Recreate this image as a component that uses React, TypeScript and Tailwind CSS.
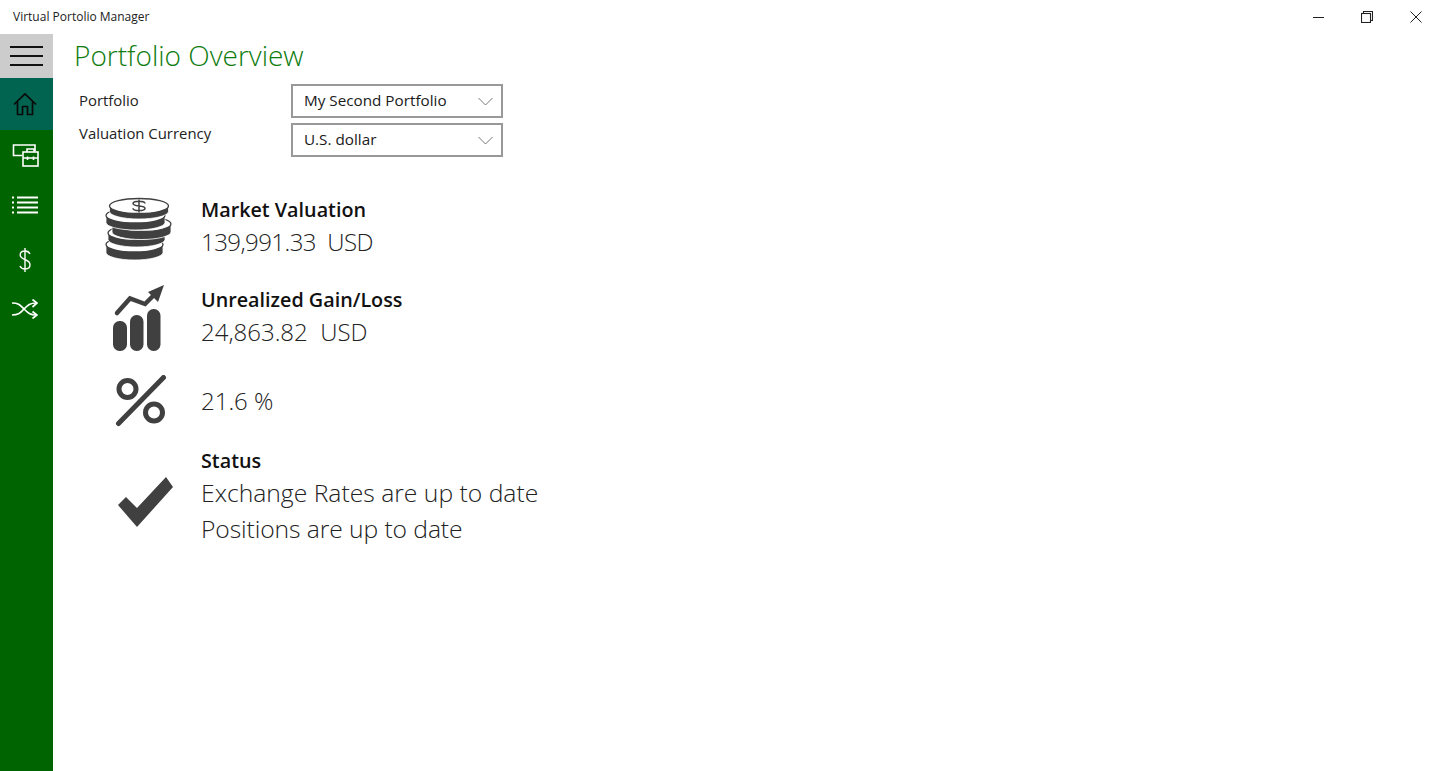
import React from "react";

const DARK = "#404040";

function Coin({ cx, cy, rx, h }: { cx: number; cy: number; rx: number; h: number }) {
  const ry = 7.5;
  return (
    <g>
      <path
        d={`M${cx - rx} ${cy} V${cy + h} A${rx} ${ry} 0 0 0 ${cx + rx} ${cy + h} V${cy} Z`}
        fill={DARK}
        stroke="#ffffff"
        strokeWidth="0.8"
      />
      <ellipse cx={cx} cy={cy} rx={rx} ry={ry} fill="#ffffff" stroke={DARK} strokeWidth="1.3" />
    </g>
  );
}

function Coins() {
  return (
    <svg width="80" height="76" viewBox="0 0 80 76">
      <Coin cx={34.5} cy={54.5} rx={28.5} h={8} />
      <Coin cx={36.5} cy={43} rx={28.5} h={6.5} />
      <Coin cx={41.5} cy={34} rx={29.5} h={8} />
      <Coin cx={35.5} cy={25.5} rx={29.5} h={7} />
      <Coin cx={39} cy={16} rx={29.5} h={5.5} />
      <path
        d="M45 13.6c0-1.5-2.6-2.4-6-2.4s-6 .9-6 2.4c0 3.4 12 1.6 12 4.6 0 1.5-2.6 2.4-6 2.4s-6-.9-6-2.4M39 9.5v13"
        fill="none"
        stroke={DARK}
        strokeWidth="1.5"
      />
    </svg>
  );
}

function Chart() {
  return (
    <svg width="70" height="76" viewBox="0 0 70 76" fill={DARK}>
      <rect x="8" y="41" width="14" height="30" rx="6.5" />
      <rect x="25" y="35" width="13.5" height="36" rx="6.5" />
      <rect x="42" y="29" width="13.5" height="42" rx="6.5" />
      <path d="M12 33 L25 18.5 L40 24 L50 14" fill="none" stroke={DARK} strokeWidth="4.5" strokeLinecap="round" />
      <path d="M59 5 L43 12 L53 22 Z" />
    </svg>
  );
}

function Percent() {
  return (
    <svg width="52" height="52" viewBox="0 0 52 52" fill="none" stroke={DARK} strokeWidth="5">
      <circle cx="12.5" cy="14" r="8.5" />
      <circle cx="39" cy="37.5" r="8.5" />
      <path d="M3.5 48.5 L48.5 2.5" strokeLinecap="round" />
    </svg>
  );
}

function Check() {
  return (
    <svg width="60" height="56" viewBox="0 0 60 56" fill={DARK}>
      <path d="M3 32 L11 24 L22 35 L51 4 L58 14 L22 54 Z" />
    </svg>
  );
}

function Select({ label }: { label: string }) {
  return (
    <div className="flex h-[34px] w-[212px] items-center justify-between border-2 border-[#999999] bg-white pb-[2px] pl-[11px] pr-[8px] text-[15.25px] text-[#1a1a1a]">
      <span>{label}</span>
      <svg width="15" height="9" viewBox="0 0 15 9" fill="none" stroke="#777777" strokeWidth="1" className="mt-[2px]">
        <path d="M0.5 1 L7.5 8 L14.5 1" />
      </svg>
    </div>
  );
}

function Row({
  icon,
  head,
  lines,
  className,
}: {
  icon: React.ReactNode;
  head?: string;
  lines: { text: string; cls: string }[];
  className: string;
}) {
  return (
    <div className={`flex ${className}`}>
      <div className="flex w-[97px] shrink-0 items-center">{icon}</div>
      <div className="flex flex-col justify-center">
        {head && <div className="text-[19.75px] font-semibold leading-[29px] text-[#111111]">{head}</div>}
        {lines.map((l) => (
          <div key={l.text} className={`whitespace-pre font-light leading-[36px] text-[#222222] ${l.cls}`}>
            {l.text}
          </div>
        ))}
      </div>
    </div>
  );
}

function NavIcon({ children, className }: { children: React.ReactNode; className: string }) {
  return <div className={`flex w-full items-center justify-center pr-[3px] ${className}`}>{children}</div>;
}

export default function App() {
  return (
    <div className="flex h-[771px] w-[1440px] flex-col overflow-hidden bg-white" style={{ fontFamily: '"Open Sans", sans-serif' }}>
      <header className="flex h-[34px] shrink-0 items-center justify-between">
        <span className="pl-[13px] text-[12px] text-[#222222]">Virtual Portolio Manager</span>
        <div className="flex items-center">
          <div className="flex h-[34px] w-[48px] items-center justify-center">
            <svg width="12" height="12" viewBox="0 0 12 12" stroke="#222" fill="none"><path d="M0 6.5H11" /></svg>
          </div>
          <div className="flex h-[34px] w-[48px] items-center justify-center">
            <svg width="12" height="12" viewBox="0 0 12 12" stroke="#222" fill="none" strokeWidth="1.1"><rect x="0.5" y="2.5" width="9" height="9" /><path d="M2.5 2.5V0.5H11.5V9.5H9.5" /></svg>
          </div>
          <div className="flex h-[34px] w-[49px] items-center justify-center">
            <svg width="12" height="12" viewBox="0 0 12 12" stroke="#222" fill="none"><path d="M0.5 0.5L11.5 11.5M11.5 0.5L0.5 11.5" /></svg>
          </div>
        </div>
      </header>
      <div className="flex min-h-0 flex-1">
        <nav className="flex w-[53px] shrink-0 flex-col bg-[#006400]">
          <div className="flex h-[44px] w-full items-center justify-center bg-[#cccccc]">
            <svg width="33" height="20" viewBox="0 0 33 20" fill="#111"><rect y="0" width="33" height="2" /><rect y="9" width="33" height="2" /><rect y="18" width="33" height="2" /></svg>
          </div>
          <NavIcon className="h-[52px] bg-[#006450]">
            <svg width="24" height="24" viewBox="0 0 24 24" fill="none" stroke="#0a0a0a" strokeWidth="1.7" strokeLinejoin="round"><path d="M1 12.5 L12 1.8 L23 12.5" /><path d="M4.5 10 V22.5 H9.5 V14.5 H14.5 V22.5 H19.5 V10" /></svg>
          </NavIcon>
          <NavIcon className="h-[50px]">
            <svg width="27" height="24" viewBox="0 0 27 24" fill="none" stroke="#fff" strokeWidth="1.6"><path d="M10 12.5 H1.5 V2 H23 V8" /><rect x="11" y="9" width="15" height="14" /><path d="M15 9 V6 H22 V9 M11 15 H26" /><path d="M15.5 13.5 V17 M21.5 13.5 V17" /></svg>
          </NavIcon>
          <NavIcon className="h-[49px]">
            <svg width="26" height="18" viewBox="0 0 26 18" fill="#fff"><rect x="5" y="0.5" width="21" height="2" /><rect x="5" y="5.5" width="21" height="2" /><rect x="5" y="10.5" width="21" height="2" /><rect x="5" y="15.5" width="21" height="2" /><rect x="0" y="0.5" width="2" height="2" /><rect x="0" y="5.5" width="2" height="2" /><rect x="0" y="10.5" width="2" height="2" /><rect x="0" y="15.5" width="2" height="2" /></svg>
          </NavIcon>
          <NavIcon className="h-[61px]">
            <svg width="12" height="24" viewBox="0 0 12 24" fill="none" stroke="#fff" strokeWidth="1.4"><path d="M11 6 C10 3.8 8.5 3 6 3 C3 3 1.2 4.7 1.2 7 C1.2 12.5 11 10.5 11 16.8 C11 19.3 9 21 6 21 C3.5 21 1.8 20 1 18 M6 0 V24" /></svg>
          </NavIcon>
          <NavIcon className="h-[38px]">
            <svg width="26" height="20" viewBox="0 0 26 20" fill="none" stroke="#fff" strokeWidth="1.7"><path d="M0 4 C7 4 8 6 12 10 C16 14 18 16 24 16" /><path d="M0 16 C7 16 8 14 12 10 C16 6 18 4 24 4" /><path d="M20.5 0.5 L25 4 L20.5 8 M20.5 12.5 L25 16 L20.5 19.5" /></svg>
          </NavIcon>
        </nav>
        <main className="flex-1 pl-[21px]">
          <h1 className="pt-[1px] text-[28px] font-light leading-[40px] text-[#107c10]">Portfolio Overview</h1>
          <div className="mt-[9px] flex pl-[5px]">
            <div className="w-[212px] text-[14.9px] text-[#222222]">
              <div className="pt-[2px] leading-[28px]">Portfolio</div>
              <div className="pt-[5px] leading-[28px]">Valuation Currency</div>
            </div>
            <div className="flex flex-col gap-[5px]">
              <Select label="My Second Portfolio" />
              <Select label="U.S. dollar" />
            </div>
          </div>
          <div className="pl-[30px]">
            <Row
              className="mt-[32px] h-[76px]"
              icon={<div className="ml-[-4px] pt-[2px]"><Coins /></div>}
              head="Market Valuation"
              lines={[{ text: "139,991.33  USD", cls: "text-[24px] tracking-[-0.55px]" }]}
            />
            <Row
              className="mt-[14px] h-[76px]"
              icon={<div className="ml-[1px] pt-[2px]"><Chart /></div>}
              head="Unrealized Gain/Loss"
              lines={[{ text: "24,863.82  USD", cls: "text-[24px]" }]}
            />
            <Row
              className="mt-[16px] h-[60px]"
              icon={<div className="pl-[11px]"><Percent /></div>}
              lines={[{ text: "21.6 %", cls: "text-[24px]" }]}
            />
            <Row
              className="mt-[15px] h-[100px]"
              icon={<div className="pl-[11px] pt-[10px]"><Check /></div>}
              head="Status"
              lines={[
                { text: "Exchange Rates are up to date", cls: "text-[24.7px]" },
                { text: "Positions are up to date", cls: "text-[24.7px] tracking-[-0.1px]" },
              ]}
            />
          </div>
        </main>
      </div>
    </div>
  );
}
